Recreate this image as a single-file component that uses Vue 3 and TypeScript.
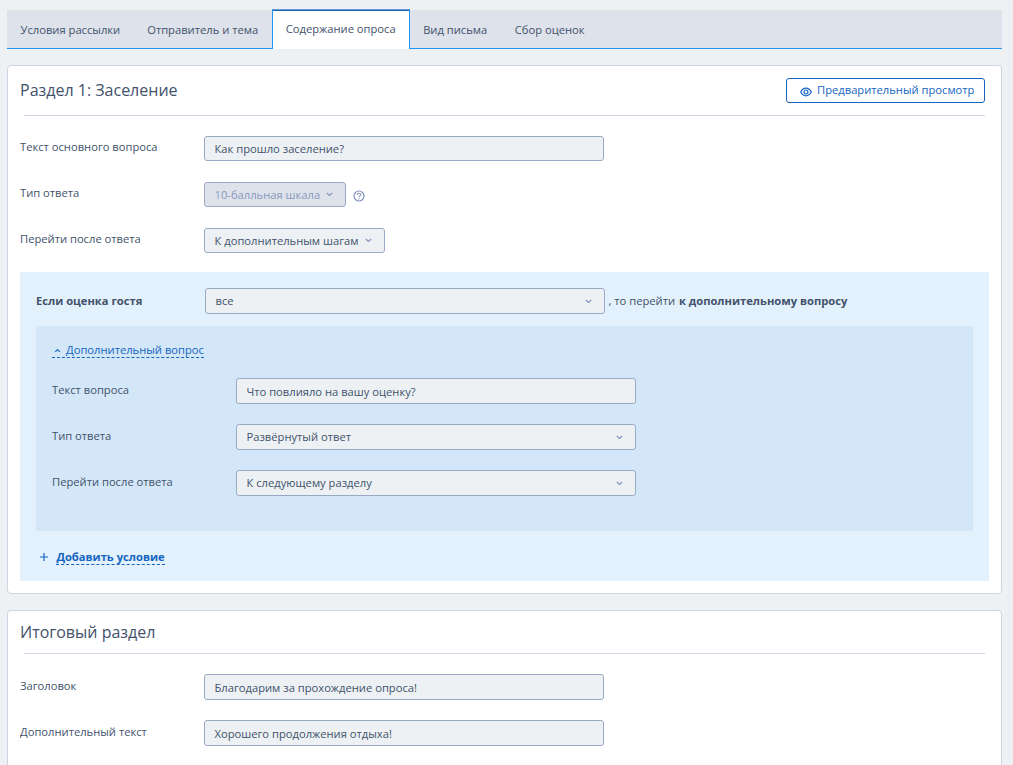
<script setup lang="ts">
const tabs: { id: string; label: string; active?: boolean }[] = [
  { id: 'terms', label: 'Условия рассылки' },
  { id: 'sender', label: 'Отправитель и тема' },
  { id: 'content', label: 'Содержание опроса', active: true },
  { id: 'view', label: 'Вид письма' },
  { id: 'rates', label: 'Сбор оценок' },
]

const followUp: { label: string; value: string; select: boolean }[] = [
  { label: 'Текст вопроса', value: 'Что повлияло на вашу оценку?', select: false },
  { label: 'Тип ответа', value: 'Развёрнутый ответ', select: true },
  { label: 'Перейти после ответа', value: 'К следующему разделу', select: true },
]

const finalRows: { label: string; value: string }[] = [
  { label: 'Заголовок', value: 'Благодарим за прохождение опроса!' },
  { label: 'Дополнительный текст', value: 'Хорошего продолжения отдыха!' },
]
</script>

<template>
  <main class="page">
    <nav class="tabs">
      <a v-for="t in tabs" :key="t.id" class="tab" :class="{ active: t.active }">{{ t.label }}</a>
    </nav>

    <section class="card first">
      <header class="head">
        <h2>Раздел 1: Заселение</h2>
        <button class="preview">
          <svg class="eye" viewBox="0 0 12 10" width="12" height="10">
            <path d="M.7 5C2 2.500 3.800 1.200 6 1.200S10 2.500 11.300 5C10 7.500 8.200 8.800 6 8.800S2 7.500.7 5Z" />
            <circle cx="6" cy="5" r="2" />
          </svg>
          <span>Предварительный просмотр</span>
        </button>
      </header>

      <div class="row">
        <label>Текст основного вопроса</label>
        <div class="field wide"><span>Как прошло заселение?</span></div>
      </div>
      <div class="row">
        <label>Тип ответа</label>
        <div class="field type disabled">
          <span>10-балльная шкала</span>
          <svg class="chev" viewBox="0 0 7 5" width="7" height="5"><path d="M.8 1 3.500 3.500 6.200 1" /></svg>
        </div>
        <svg class="help" viewBox="0 0 12 12" width="12" height="12">
          <circle cx="6" cy="6" r="5" />
          <path d="M4.300 4.900C4.300 2.700 7.700 2.800 7.700 4.700 7.700 5.900 6 5.900 6 7.300M6 8.200v1" />
        </svg>
      </div>
      <div class="row">
        <label>Перейти после ответа</label>
        <div class="field goto">
          <span>К дополнительным шагам</span>
          <svg class="chev" viewBox="0 0 7 5" width="7" height="5"><path d="M.8 1 3.500 3.500 6.200 1" /></svg>
        </div>
      </div>

      <div class="condition">
        <div class="cond-row">
          <b class="cond-label">Если оценка гостя</b>
          <div class="field wide tall">
            <span>все</span>
            <svg class="chev" viewBox="0 0 7 5" width="7" height="5"><path d="M.8 1 3.500 3.500 6.200 1" /></svg>
          </div>
          <p class="then">, то перейти <b>к дополнительному вопросу</b></p>
        </div>

        <div class="nested">
          <a class="toggle">
            <svg class="up" viewBox="0 0 7 5" width="7" height="5"><path d="M1.200 3.800 3.500 1.500 5.800 3.800" /></svg>
            <span>Дополнительный вопрос</span>
          </a>
          <div v-for="r in followUp" :key="r.label" class="row">
            <label>{{ r.label }}</label>
            <div class="field wide tall" :class="{ text: !r.select }">
              <span>{{ r.value }}</span>
              <svg v-if="r.select" class="chev" viewBox="0 0 7 5" width="7" height="5"><path d="M.8 1 3.500 3.500 6.200 1" /></svg>
            </div>
          </div>
        </div>

        <div class="add">
          <svg viewBox="0 0 8 8" width="8" height="8"><path d="M4 0v8M0 4h8" /></svg>
          <a>Добавить условие</a>
        </div>
      </div>
    </section>

    <section class="card last">
      <header class="head">
        <h2>Итоговый раздел</h2>
      </header>
      <div v-for="r in finalRows" :key="r.label" class="row">
        <label>{{ r.label }}</label>
        <div class="field wide tall"><span>{{ r.value }}</span></div>
      </div>
    </section>
  </main>
</template>

<style>
body {
  background: #edf1f4;
  overflow: hidden;
}
</style>

<style scoped>
* {
  box-sizing: border-box;
}
.page {
  height: 765px;
  overflow: hidden;
  padding: 9px 11px 0 7px;
  background: #edf1f4;
  color: #42526b;
  font: 11.2px/16px "Open Sans", "Noto Sans", sans-serif;
}
svg {
  display: block;
  flex: none;
  fill: none;
}
.tabs {
  display: flex;
  height: 40px;
  padding-top: 1px;
  background: linear-gradient(#edf1f4 1px, #dee2eb 1px);
  border-bottom: 1px solid #2196f3;
}
.tab {
  padding: 12px 13.5px 0;
  white-space: nowrap;
}
.tab.active {
  height: 40px;
  margin-top: -1px;
  padding: 12px 13px 0;
  background: #fff;
  border: 1px solid #2196f3;
  border-top: 0;
  border-bottom: 0;
  box-shadow: inset 0 1px #6b9bd8, inset 0 2px #1561b8;
}
.tab.active + .tab {
  padding-right: 14px;
}
.card {
  background: #fff;
  border: 1px solid #ced5e0;
  border-radius: 4px;
  padding: 12px 12px 0;
}
.first {
  height: 529px;
  margin-top: 16px;
}
.last {
  height: 200px;
  margin-top: 16px;
}
.head {
  display: flex;
  justify-content: space-between;
  align-items: flex-start;
  height: 38px;
  margin: 0 4px 20px;
  border-bottom: 1px solid #ced5e0;
}
.last .head {
  height: 31px;
}
h2 {
  margin: 0 0 0 -4px;
  font-size: 16px;
  line-height: 24px;
  font-weight: 400;
}
.last h2 {
  margin-top: -3px;
}
.preview {
  display: flex;
  align-items: center;
  width: 199px;
  height: 25px;
  padding: 0 0 1px 12.5px;
  gap: 5.5px;
  border: 1px solid #1565c0;
  border-radius: 3px;
  background: #fff;
  color: #1565c0;
  font: inherit;
  white-space: nowrap;
}
.eye {
  margin-top: 3px;
  stroke: #1565c0;
  stroke-width: 1.2;
}
.row {
  display: flex;
  align-items: flex-start;
  height: 46px;
}
label {
  width: 184px;
  padding-top: 3px;
  white-space: nowrap;
}
.last label {
  padding-top: 4px;
}
.field {
  display: flex;
  align-items: center;
  justify-content: space-between;
  height: 25px;
  padding: 1px 12px 0 9.5px;
  background: #edf1f4;
  border: 1px solid #9aa9c6;
  border-radius: 3px;
  white-space: nowrap;
}
.wide {
  width: 400px;
}
.tall {
  height: 26px;
}
.type {
  width: 142px;
}
.goto {
  width: 181px;
}
.disabled {
  background: #dee2eb;
  color: #8a9abb;
}
.chev {
  stroke: #8396bd;
  stroke-width: 1.2;
}
.type .chev,
.goto .chev {
  margin-top: -2px;
}
.help {
  margin: 7.5px 0 0 6.500px;
  stroke: #8396bd;
  stroke-width: 1.2;
}
.condition {
  height: 309px;
  margin-top: -2px;
  padding: 16px 16px 0;
  background: #e3f1fd;
}
.first .condition {
  width: 969px;
}
.cond-row {
  display: flex;
  height: 38px;
}
.cond-label {
  width: 169px;
  padding-top: 5px;
}
.cond-row .field,
.nested .field {
  padding-top: 0;
}
.nested .field.text {
  padding-top: 2px;
}
.then {
  margin: 5px 0 0 3.5px;
}
.then b {
  margin-left: 1px;
}
.nested {
  height: 205px;
  padding: 17px 16px 0;
  background: #d4e7f8;
}
.toggle {
  display: flex;
  align-items: center;
  width: 152px;
  height: 15px;
  padding-left: 2px;
  gap: 5px;
  margin-bottom: 20px;
  color: #1565c0;
  border-bottom: 1px dashed #1565c0;
  white-space: nowrap;
}
.up {
  stroke: #1565c0;
  stroke-width: 1.2;
}
.nested label {
  padding-top: 4px;
}
.add {
  display: flex;
  align-items: center;
  gap: 8px;
  margin: 19px 0 0 4.4px;
  color: #1565c0;
  font-weight: 700;
}
.add svg {
  margin-top: -1px;
  stroke: #1565c0;
  stroke-width: 1.2;
}
.add a {
  height: 15px;
  line-height: 14px;
  border-bottom: 1px dashed #1565c0;
}
</style>
